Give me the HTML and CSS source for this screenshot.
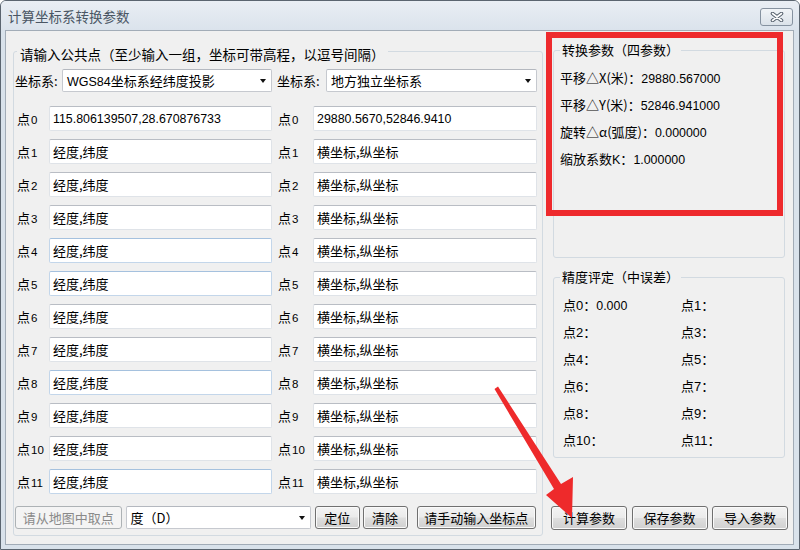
FILE: index.html
```html
<!DOCTYPE html>
<html lang="zh-CN">
<head>
<meta charset="utf-8">
<title>计算坐标系转换参数</title>
<link rel="stylesheet" href="styles.css">
</head>
<body>
<div class="window">
  <div class="titlebar">
    <span class="title">计算坐标系转换参数</span>
    <button class="close" aria-label="关闭">
      <svg width="14" height="10" viewBox="0 0 14 10">
        <path d="M2.5 1.5 L11.5 8.5 M11.5 1.5 L2.5 8.5" stroke="#56616d" stroke-width="3.6" stroke-linecap="round" fill="none"/>
        <path d="M2.5 1.5 L11.5 8.5 M11.5 1.5 L2.5 8.5" stroke="#ffffff" stroke-width="1.6" stroke-linecap="round" fill="none"/>
      </svg>
    </button>
  </div>
  <div class="client">
    <fieldset class="group left-group">
      <legend>请输入公共点（至少输入一组，坐标可带高程，以逗号间隔）</legend>
      <div class="crs-row">
        <span class="lbl">坐标系:</span>
        <div class="combo"><span class="combo-text"><span class="lat">WGS84</span>坐标系经纬度投影</span><i class="caret"></i></div>
        <span class="lbl lbl-r">坐标系:</span>
        <div class="combo"><span class="combo-text">地方独立坐标系</span><i class="caret"></i></div>
      </div>
      <div class="points">
        <span class="pl">点<span class="n">0</span></span><input class="tb num" value="115.806139507,28.670876733" readonly>
        <span class="pl pl-r">点<span class="n">0</span></span><input class="tb num" value="29880.5670,52846.9410" readonly>

        <span class="pl">点<span class="n">1</span></span><input class="tb" value="经度,纬度" readonly>
        <span class="pl pl-r">点<span class="n">1</span></span><input class="tb" value="横坐标,纵坐标" readonly>

        <span class="pl">点<span class="n">2</span></span><input class="tb" value="经度,纬度" readonly>
        <span class="pl pl-r">点<span class="n">2</span></span><input class="tb" value="横坐标,纵坐标" readonly>

        <span class="pl">点<span class="n">3</span></span><input class="tb" value="经度,纬度" readonly>
        <span class="pl pl-r">点<span class="n">3</span></span><input class="tb" value="横坐标,纵坐标" readonly>

        <span class="pl">点<span class="n">4</span></span><input class="tb hl" value="经度,纬度" readonly>
        <span class="pl pl-r">点<span class="n">4</span></span><input class="tb" value="横坐标,纵坐标" readonly>

        <span class="pl">点<span class="n">5</span></span><input class="tb hl" value="经度,纬度" readonly>
        <span class="pl pl-r">点<span class="n">5</span></span><input class="tb" value="横坐标,纵坐标" readonly>

        <span class="pl">点<span class="n">6</span></span><input class="tb" value="经度,纬度" readonly>
        <span class="pl pl-r">点<span class="n">6</span></span><input class="tb" value="横坐标,纵坐标" readonly>

        <span class="pl">点<span class="n">7</span></span><input class="tb" value="经度,纬度" readonly>
        <span class="pl pl-r">点<span class="n">7</span></span><input class="tb" value="横坐标,纵坐标" readonly>

        <span class="pl">点<span class="n">8</span></span><input class="tb hl" value="经度,纬度" readonly>
        <span class="pl pl-r">点<span class="n">8</span></span><input class="tb" value="横坐标,纵坐标" readonly>

        <span class="pl">点<span class="n">9</span></span><input class="tb" value="经度,纬度" readonly>
        <span class="pl pl-r">点<span class="n">9</span></span><input class="tb" value="横坐标,纵坐标" readonly>

        <span class="pl">点<span class="n">10</span></span><input class="tb" value="经度,纬度" readonly>
        <span class="pl pl-r">点<span class="n">10</span></span><input class="tb" value="横坐标,纵坐标" readonly>

        <span class="pl">点<span class="n">11</span></span><input class="tb hl" value="经度,纬度" readonly>
        <span class="pl pl-r">点<span class="n">11</span></span><input class="tb" value="横坐标,纵坐标" readonly>
      </div>
      <div class="tools">
        <button class="btn btn-disabled pick" disabled>请从地图中取点</button>
        <div class="combo unit"><span class="combo-text">度（D）</span><i class="caret"></i></div>
        <button class="btn locate">定位</button>
        <button class="btn clear">清除</button>
        <button class="btn manual">请手动输入坐标点</button>
      </div>
    </fieldset>

    <div class="right-col">
      <fieldset class="group params">
        <legend>转换参数（四参数）</legend>
        <div class="kv">平移△X(米)：<span class="num">29880.567000</span></div>
        <div class="kv">平移△Y(米)：<span class="num">52846.941000</span></div>
        <div class="kv">旋转△α(弧度)：<span class="num">0.000000</span></div>
        <div class="kv">缩放系数<span class="lat">K</span>：<span class="num">1.000000</span></div>
      </fieldset>
      <fieldset class="group accuracy">
        <legend>精度评定（中误差）</legend>
        <div class="acc-grid">
          <span>点<span class="d">0</span>：<span class="num">0.000</span></span><span>点<span class="d">1</span>：</span>
          <span>点<span class="d">2</span>：</span><span>点<span class="d">3</span>：</span>
          <span>点<span class="d">4</span>：</span><span>点<span class="d">5</span>：</span>
          <span>点<span class="d">6</span>：</span><span>点<span class="d">7</span>：</span>
          <span>点<span class="d">8</span>：</span><span>点<span class="d">9</span>：</span>
          <span>点<span class="d">10</span>：</span><span>点<span class="d">11</span>：</span>
        </div>
      </fieldset>
      <div class="actions">
        <button class="btn act">计算参数</button>
        <button class="btn act">保存参数</button>
        <button class="btn act">导入参数</button>
      </div>
    </div>
  </div>

  <div class="redbox"></div>
  <svg class="annot" width="800" height="550" viewBox="0 0 800 550">
    <polygon points="494.5,389 498,386.5 561,484 573,477 572,518 546,495 554,489" fill="#ee2a2b"/>
  </svg>
</div>
</body>
</html>
```

FILE: styles.css
```css
* {
  box-sizing: border-box;
}

html,
body {
  margin: 0;
  padding: 0;
}

body {
  width: 800px;
  height: 550px;
  overflow: hidden;
  background: #ffffff;
  font-family: "Noto Sans CJK SC", sans-serif;
  font-size: 13px;
  color: #000000;
}

.window {
  position: relative;
  width: 800px;
  height: 550px;
  border: 1px solid #5b6570;
  border-radius: 6px 6px 0 0;
  background: #d9e2eb;
  display: flex;
  flex-direction: column;
}

.titlebar {
  flex: none;
  height: 29px;
  display: flex;
  align-items: center;
  justify-content: space-between;
  padding: 0 6px 0 7px;
  background: linear-gradient(#e9eef4, #dbe3ec);
  border-radius: 5px 5px 0 0;
}

.title {
  font-size: 13.5px;
  line-height: 18px;
  color: #4a5664;
}

.close {
  align-self: flex-start;
  margin-top: 7px;
  width: 33px;
  height: 18px;
  padding: 0;
  border: 1px solid #8692a0;
  border-radius: 3px;
  background: linear-gradient(#f1f4f7, #dbe2e9);
  display: flex;
  align-items: center;
  justify-content: center;
}

.client {
  flex: 1;
  min-height: 0;
  margin: 0 5px 4px 4px;
  border: 1px solid #a2acb7;
  background: #f0f0f0;
  display: flex;
}

.group {
  margin: 0;
  min-width: 0;
  border: 1px solid #d2dae1;
  border-radius: 3px;
}

.group > legend {
  line-height: 18px;
  padding: 0 2px;
}

/* left group */
.left-group {
  width: 530px;
  margin: 8px 0 8px 7px;
  padding: 6px 6px 5px 1px;
}

.left-group > legend {
  font-size: 13.5px;
  margin-left: 2px;
  padding: 6px 3px 0;
}

.crs-row {
  display: grid;
  grid-template-columns: 47px 210px 54px 211px;
  height: 23px;
  align-items: center;
}

.lbl {
  line-height: 23px;
  white-space: nowrap;
}

.lbl-r {
  padding-left: 5px;
}

.combo {
  position: relative;
  height: 23px;
  background: #ffffff;
  border: 1px solid #c6c9cf;
  border-top-color: #b4b8bf;
  border-radius: 2px;
  display: flex;
  align-items: center;
  padding-left: 4px;
}

.combo-text {
  line-height: 21px;
  white-space: nowrap;
}

.caret {
  position: absolute;
  right: 5px;
  top: 9px;
  width: 0;
  height: 0;
  border-left: 3.5px solid transparent;
  border-right: 3.5px solid transparent;
  border-top: 4px solid #111111;
}

.lat {
  font-family: "Liberation Sans", sans-serif;
  font-size: 12.5px;
  line-height: 1;
}

.num {
  font-family: "Liberation Sans", "Noto Sans CJK SC", sans-serif;
  font-size: 12.4px;
  line-height: 1;
}

.points {
  margin-top: 14px;
  display: grid;
  grid-template-columns: 34px 223px 41px 224px;
  grid-auto-rows: 25px;
  row-gap: 8px;
  align-items: center;
}

.pl {
  padding-left: 2px;
  line-height: 25px;
  white-space: nowrap;
}

.pl-r {
  padding-left: 6px;
}

.n {
  font-family: "Liberation Sans", sans-serif;
  font-size: 11.5px;
  line-height: 1;
  margin-left: 1px;
}

.tb {
  display: block;
  width: 100%;
  height: 25px;
  margin: 0;
  padding: 0 3px;
  background: #ffffff;
  border: 1px solid #dfe3e8;
  border-top-color: #b9bdc4;
  border-radius: 2px;
  outline: none;
  color: #000000;
  font-family: "Noto Sans CJK SC", sans-serif;
  font-size: 13px;
}

.tb.num {
  font-family: "Liberation Sans", "Noto Sans CJK SC", sans-serif;
  font-size: 12.4px;
}

.tb.hl {
  border-color: #c3d6ea;
  border-top-color: #a5c1de;
}

.tools {
  margin-top: 12px;
  height: 23px;
  display: flex;
}

.btn {
  height: 23px;
  padding: 0;
  border: 1px solid #707070;
  border-radius: 3px;
  background: linear-gradient(#f3f3f3 0%, #ebebeb 48%, #dedede 52%, #d0d0d0 100%);
  box-shadow: inset 0 0 0 1px #fafafa;
  color: #000000;
  font-family: "Noto Sans CJK SC", sans-serif;
  font-size: 13px;
  line-height: 21px;
  white-space: nowrap;
}

.btn-disabled {
  border-color: #adb2b5;
  background: #f4f4f4;
  box-shadow: none;
  color: #8a8a8a;
}

.pick {
  width: 107px;
}

.unit {
  width: 186px;
  margin-left: 4px;
}

.locate {
  width: 45px;
  margin-left: 4px;
}

.clear {
  width: 45px;
  margin-left: 3px;
}

.manual {
  width: 120px;
  margin-left: 9px;
}

/* right column */
.right-col {
  width: 237px;
  margin: 10px 0 14px 8px;
  display: flex;
  flex-direction: column;
}

.params {
  height: 217px;
  margin: 0 3px 0 2px;
  padding: 5px 4px 0 6px;
}

.kv {
  line-height: 27px;
  white-space: nowrap;
}

.accuracy {
  height: 190px;
  margin: 10px 3px 0 2px;
  padding: 5px 4px 0 6px;
}

.acc-grid {
  margin-left: 3px;
  display: grid;
  grid-template-columns: 118px 1fr;
  grid-auto-rows: 27px;
  line-height: 27px;
}

.d {
  font-family: "Liberation Sans", sans-serif;
  font-size: 13px;
  line-height: 1;
}

.actions {
  margin-top: auto;
  display: flex;
  justify-content: space-between;
}

.act {
  width: 76px;
  height: 24px;
  line-height: 22px;
}

/* annotation overlays */
.redbox {
  position: absolute;
  left: 545px;
  top: 31px;
  width: 237px;
  height: 184px;
  border: 6px solid #ee2a2d;
  pointer-events: none;
}

.annot {
  position: absolute;
  left: -1px;
  top: -1px;
  pointer-events: none;
}
```
